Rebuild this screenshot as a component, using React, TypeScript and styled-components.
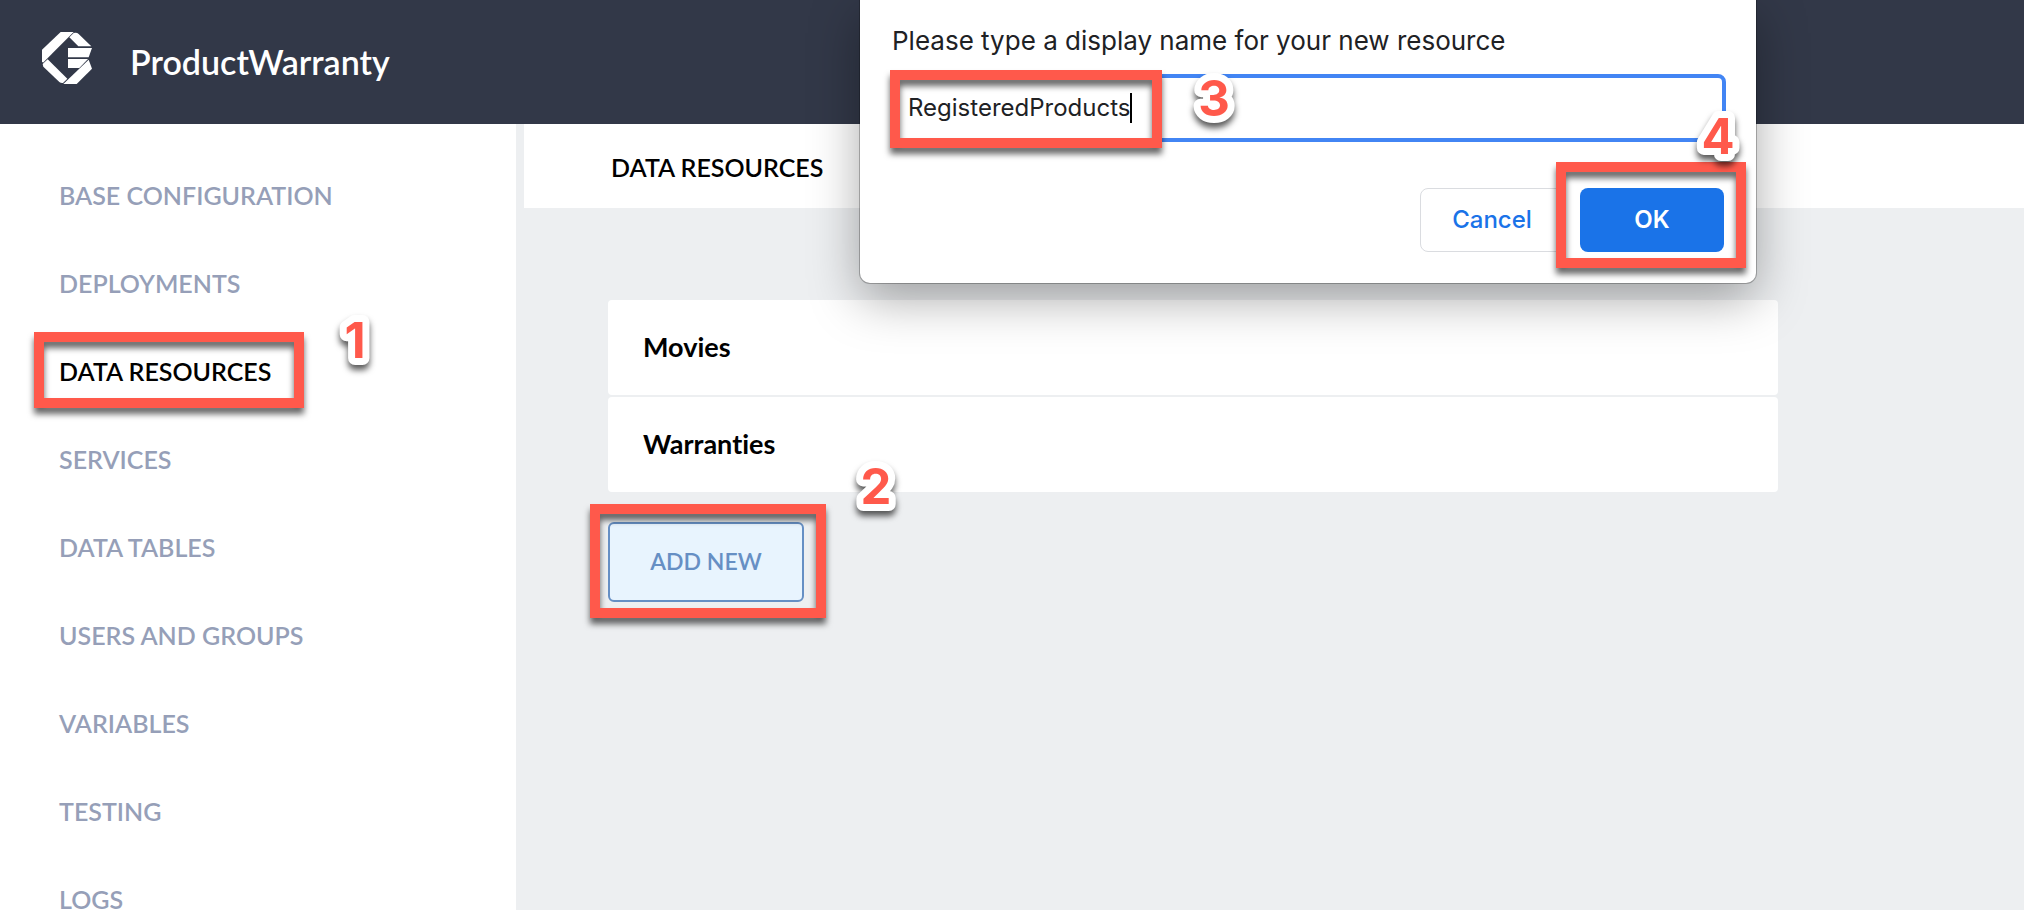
import React from "react";
import styled, { createGlobalStyle } from "styled-components";

const GlobalStyle = createGlobalStyle`
  * { box-sizing: border-box; }
  body { margin: 0; background: #edeff1; }
  button, input { font: inherit; margin: 0; }
`;

const brandFont = `Lato, "Open Sans", sans-serif`;
const systemFont = `Inter, Roboto, sans-serif`;
const accent = "#ff594b";

const Page = styled.div`
  position: relative;
  display: flex;
  flex-direction: column;
  height: 100vh;
  overflow: hidden;
  font-family: ${brandFont};
  font-variant-ligatures: none;
  color: #000;
`;

const Header = styled.header`
  display: flex;
  flex: none;
  align-items: center;
  gap: 38px;
  height: 124px;
  padding: 0 42px 8px;
  background: #323848;
  color: #fff;
`;

const AppName = styled.h1`
  margin: 8px 0 0;
  font-size: 34px;
  line-height: 44px;
  font-weight: 600;
`;

const Body = styled.div`
  display: flex;
  flex: 1;
  min-height: 0;
`;

const Sidebar = styled.nav`
  flex: none;
  width: 516px;
  padding: 27px 59px 0;
  background: #fff;
`;

const NavList = styled.ul`
  margin: 0;
  padding: 0;
  list-style: none;
`;

const NavItem = styled.li`
  display: flex;
  align-items: center;
  height: 88px;
`;

const NavLink = styled.a<{ $active?: boolean }>`
  position: relative;
  font-size: 25px;
  line-height: 32px;
  font-weight: 600;
  color: ${(p) => (p.$active ? "#000" : "#969fb8")};
  text-decoration: none;
  white-space: nowrap;
`;

const Main = styled.main`
  flex: 1;
  min-width: 0;
  padding-left: 8px;
`;

const TabBar = styled.div`
  display: flex;
  align-items: center;
  height: 84px;
  padding: 2px 87px 0;
  background: #fff;
`;

const TabTitle = styled.h2`
  margin: 0;
  font-size: 25px;
  line-height: 32px;
  font-weight: 600;
`;

const Content = styled.section`
  display: flex;
  flex-direction: column;
  align-items: flex-start;
  gap: 30px;
  max-width: 1254px;
  padding: 92px 0 0 84px;
`;

const ResourceList = styled.ul`
  display: flex;
  flex-direction: column;
  gap: 2px;
  width: 100%;
  margin: 0;
  padding: 0;
  list-style: none;
`;

const Resource = styled.li`
  display: flex;
  align-items: center;
  height: 95px;
  padding: 0 35px 2px;
  border-radius: 4px;
  background: #fff;
  font-size: 27px;
  line-height: 36px;
  font-weight: 700;
`;

const AddButton = styled.button`
  position: relative;
  width: 196px;
  height: 80px;
  padding: 0 0 2px;
  border: 2px solid #668fc4;
  border-radius: 6px;
  background: #e8f4fe;
  color: #668fc4;
  font-size: 23px;
  font-weight: 600;
`;

const Dialog = styled.form`
  position: absolute;
  top: 0;
  left: 860px;
  width: 896px;
  padding: 24px 32px 31px;
  border-radius: 0 0 10px 10px;
  background: #fff;
  box-shadow: 0 0 0 1px rgba(0, 0, 0, 0.25), 0 16px 50px rgba(0, 0, 0, 0.34);
  font-family: ${systemFont};
  color: #202124;
`;

const Prompt = styled.label`
  display: block;
  font-size: 26px;
  line-height: 34px;
`;

const Field = styled.div`
  position: relative;
  display: flex;
  align-items: center;
  height: 68px;
  margin: 16px -2px 0 0;
  padding: 0 12px;
  border: 4px solid #4285f4;
  border-radius: 8px;
`;

const NameInput = styled.input`
  field-sizing: content;
  padding: 0;
  border: 0;
  outline: 0;
  background: none;
  color: inherit;
  font-size: 24px;
  line-height: 32px;
  caret-color: transparent;
`;

const Caret = styled.span`
  width: 2px;
  height: 30px;
  background: #000;
`;

const Actions = styled.div`
  display: flex;
  justify-content: flex-end;
  gap: 16px;
  margin-top: 46px;
`;

const DialogButton = styled.button<{ $primary?: boolean }>`
  position: relative;
  width: 144px;
  height: 64px;
  padding: 0 0 2px;
  border: ${(p) => (p.$primary ? "0" : "1px solid #dadce0")};
  border-radius: 8px;
  background: ${(p) => (p.$primary ? "#1a73e8" : "#fff")};
  color: ${(p) => (p.$primary ? "#fff" : "#1a73e8")};
  font-size: 24px;
  font-weight: ${(p) => (p.$primary ? 600 : 500)};
`;

const Highlight = styled.span<{ $inset: string }>`
  position: absolute;
  inset: ${(p) => p.$inset};
  border: 10px solid ${accent};
  filter: drop-shadow(0 6px 3px rgba(0, 0, 0, 0.6));
  pointer-events: none;
`;

const StepBadge = styled.svg<{ $top: number; $left: number }>`
  position: absolute;
  top: ${(p) => p.$top}px;
  left: ${(p) => p.$left}px;
  width: 60px;
  height: 64px;
  overflow: visible;
  filter: drop-shadow(0 5px 3px rgba(0, 0, 0, 0.65));
  pointer-events: none;

  text {
    font: 700 49px Inter, Roboto, sans-serif;
    fill: ${accent};
    stroke: #fff;
    stroke-width: 14px;
    stroke-linejoin: round;
    paint-order: stroke;
    text-anchor: middle;
  }
`;

function Step({ n, top, left }: { n: number; top: number; left: number }) {
  return (
    <StepBadge $top={top} $left={left} aria-hidden="true">
      <text x="30" y="50">{n}</text>
    </StepBadge>
  );
}

function Logo() {
  return (
    <svg width="50" height="52" viewBox="126 96 150 156" fill="#fff" aria-hidden="true">
      <path d="M182 96H221L129 188L126 184V149Z" />
      <path d="M208 112L221 99Q230 96 236 102L274 139H235Z" />
      <path d="M204 144H276L266 172H204Z" />
      <path d="M204 177H264L238 204H204Z" />
      <path d="M266 179L276 206L230 252H190Z" />
      <path d="M143 178L202 236L189 249Q183 250 178 246L130 200L128 192Z" />
    </svg>
  );
}

const navItems = [
  "BASE CONFIGURATION",
  "DEPLOYMENTS",
  "DATA RESOURCES",
  "SERVICES",
  "DATA TABLES",
  "USERS AND GROUPS",
  "VARIABLES",
  "TESTING",
  "LOGS",
];

export default function App() {
  return (
    <Page>
      <GlobalStyle />
      <Header>
        <Logo />
        <AppName>ProductWarranty</AppName>
      </Header>
      <Body>
        <Sidebar>
          <NavList>
            {navItems.map((label) => {
              const active = label === "DATA RESOURCES";
              return (
                <NavItem key={label}>
                  <NavLink href="#" $active={active} aria-current={active ? "page" : undefined}>
                    {label}
                    {active && <Highlight $inset="-23px -33px -21px -25px" />}
                  </NavLink>
                </NavItem>
              );
            })}
          </NavList>
        </Sidebar>
        <Main>
          <TabBar>
            <TabTitle>DATA RESOURCES</TabTitle>
          </TabBar>
          <Content>
            <ResourceList>
              <Resource>Movies</Resource>
              <Resource>Warranties</Resource>
            </ResourceList>
            <AddButton type="button">
              ADD NEW
              <Highlight $inset="-20px -24px -18px -20px" />
            </AddButton>
          </Content>
        </Main>
      </Body>
      <Dialog onSubmit={(e) => e.preventDefault()}>
        <Prompt htmlFor="resource-name">Please type a display name for your new resource</Prompt>
        <Field>
          <NameInput id="resource-name" type="text" defaultValue="RegisteredProducts" />
          <Caret />
          <Highlight $inset="-8px 560px -10px -6px" />
        </Field>
        <Actions>
          <DialogButton type="button">Cancel</DialogButton>
          <DialogButton type="submit" $primary>
            OK
            <Highlight $inset="-26px -22px -16px -24px" />
          </DialogButton>
        </Actions>
      </Dialog>
      <Step n={1} top={308} left={325} />
      <Step n={2} top={454} left={846} />
      <Step n={3} top={66} left={1184} />
      <Step n={4} top={104} left={1688} />
    </Page>
  );
}
